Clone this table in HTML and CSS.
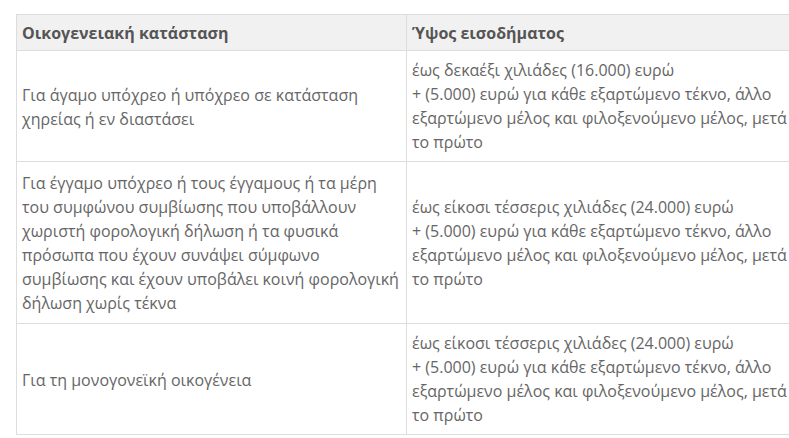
FILE: index.html
```html
<!DOCTYPE html>
<html lang="el">
<head>
<meta charset="utf-8">
<link rel="stylesheet" href="styles.css">
</head>
<body>
<table class="income-table">
  <thead>
    <tr>
      <th class="col-status">Οικογενειακή κατάσταση</th>
      <th class="col-income">Ύψος εισοδήματος</th>
    </tr>
  </thead>
  <tbody>
    <tr>
      <td class="cell-status">Για άγαμο υπόχρεο ή υπόχρεο σε κατάσταση χηρείας ή εν διαστάσει</td>
      <td class="cell-income">έως δεκαέξι χιλιάδες (16.000) ευρώ<br>+ (5.000) ευρώ για κάθε εξαρτώμενο τέκνο, άλλο εξαρτώμενο μέλος και φιλοξενούμενο μέλος, μετά το πρώτο</td>
    </tr>
    <tr>
      <td class="cell-status">Για έγγαμο υπόχρεο ή τους έγγαμους ή τα μέρη του συμφώνου συμβίωσης που υποβάλλουν χωριστή φορολογική δήλωση ή τα φυσικά πρόσωπα που έχουν συνάψει σύμφωνο συμβίωσης και έχουν υποβάλει κοινή φορολογική δήλωση χωρίς τέκνα</td>
      <td class="cell-income">έως είκοσι τέσσερις χιλιάδες (24.000) ευρώ<br>+ (5.000) ευρώ για κάθε εξαρτώμενο τέκνο, άλλο εξαρτώμενο μέλος και φιλοξενούμενο μέλος, μετά το πρώτο</td>
    </tr>
    <tr>
      <td class="cell-status">Για τη μονογονεϊκή οικογένεια</td>
      <td class="cell-income">έως είκοσι τέσσερις χιλιάδες (24.000) ευρώ<br>+ (5.000) ευρώ για κάθε εξαρτώμενο τέκνο, άλλο εξαρτώμενο μέλος και φιλοξενούμενο μέλος, μετά το πρώτο</td>
    </tr>
  </tbody>
</table>
</body>
</html>
```

FILE: styles.css
```css
html, body {
  margin: 0;
  padding: 0;
  background: #ffffff;
  overflow: hidden;
}

body {
  padding: 14px 0 0 16px;
  font-family: "Open Sans", "Noto Sans", sans-serif;
  font-size: 16px;
  line-height: 24px;
  color: #666666;
}

.income-table {
  border-collapse: collapse;
  width: 784px;
  table-layout: fixed;
}

.income-table th,
.income-table td {
  border: 1px solid #dddddd;
  text-align: left;
  vertical-align: middle;
}

.income-table th {
  background: #f1f1f1;
  color: #555555;
  font-weight: 700;
  padding: 6px 6px 5px 5px;
}

.cell-status {
  padding: 9px 6px 8px 5px;
}

.cell-income {
  padding: 7px 6px 7px 5px;
}

.col-status {
  width: 378px;
}
```
